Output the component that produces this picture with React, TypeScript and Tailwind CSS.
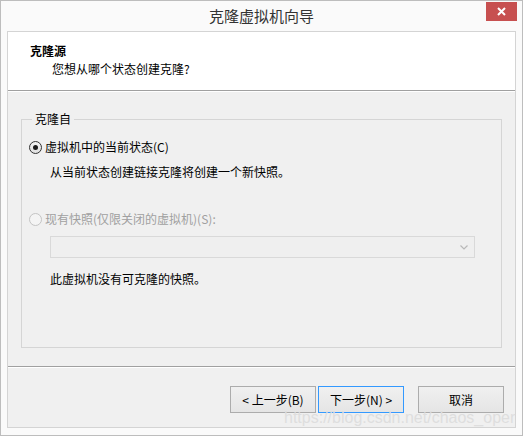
import React from 'react';

const font = { fontFamily: '"Noto Sans CJK SC", "Noto Sans", sans-serif' };

interface RadioProps {
  checked?: boolean;
  disabled?: boolean;
  label: string;
}

const Radio: React.FC<RadioProps> = ({ checked = false, disabled = false, label }) => {
  const ring = disabled ? 'border-[#c4c4c4] bg-[#f4f4f4]' : 'border-[#333333] bg-gradient-to-b from-[#f2f2f2] to-[#e0e0e0]';
  return (
    <div className="flex items-center h-[16px]">
      <span className={'w-[13px] h-[13px] rounded-full border flex items-center justify-center ' + ring}>
        {checked && <span className="w-[5px] h-[5px] rounded-full bg-[#1a1a1a]" />}
      </span>
      <span className={'ml-[3px] text-[12px] leading-[16px] ' + (disabled ? 'text-[#a0a0a0]' : 'text-black')}>{label}</span>
    </div>
  );
};

interface ButtonProps {
  children: React.ReactNode;
  primary?: boolean;
  className?: string;
}

const Button: React.FC<ButtonProps> = ({ children, primary = false, className = '' }) => {
  const borderClass = primary ? 'border-[#3399ff]' : 'border-[#acacac]';
  return (
    <div
      className={
        'w-[86px] h-[27px] border bg-gradient-to-b from-[#f0f0f0] to-[#e5e5e5] flex items-center justify-center text-[12px] leading-[16px] text-black ' +
        borderClass +
        ' ' +
        className
      }
    >
      {children}
    </div>
  );
};

export default function App() {
  return (
    <div
      className="relative w-[523px] h-[436px] border border-[#bdbdbd] bg-[#fafafa] flex flex-col overflow-hidden"
      style={font}
    >
      {/* title bar */}
      <div className="relative h-[30px] flex items-center justify-center shrink-0">
        <span className="text-[15px] leading-[20px] text-[#333333]">克隆虚拟机向导</span>
        <div className="absolute right-[5px] top-[1px] w-[31px] h-[19px] bg-[#c75050] flex items-center justify-center">
          <svg width="9" height="9" viewBox="0 0 9 9">
            <path d="M1 1 L8 8 M8 1 L1 8" stroke="#ffffff" strokeWidth="2" />
          </svg>
        </div>
      </div>

      {/* client */}
      <div className="mx-[6px] mb-[7px] flex-1 border border-[#d4d4d4] bg-[#f0f0f0] flex flex-col">
        <div className="h-[58px] bg-white pt-[11px] pl-[22px] shrink-0">
          <div className="text-[12px] leading-[16px] font-bold text-black">克隆源</div>
          <div className="mt-[2px] pl-[22px] text-[12px] leading-[16px] text-black">您想从哪个状态创建克隆?</div>
        </div>
        <div className="h-px bg-[#a0a0a0]" />
        <div className="h-px bg-white" />

        <div className="flex-1 px-[13px]">
          <fieldset className="mt-[19px] h-[237px] border border-[#d5d5d5] pl-[7px]">
            <legend className="ml-[3px] px-[3px] text-[12px] leading-[16px] text-black">克隆自</legend>
            <div className="mt-[12px]">
              <Radio checked label="虚拟机中的当前状态(C)" />
            </div>
            <div className="mt-[9px] ml-[21px] text-[12px] leading-[16px] text-black">
              从当前状态创建链接克隆将创建一个新快照。
            </div>
            <div className="mt-[31px]">
              <Radio disabled label="现有快照(仅限关闭的虚拟机)(S):" />
            </div>
            <div className="mt-[9px] ml-[21px] w-[425px] h-[22px] border border-[#d9d9d9] bg-[#efefef] flex items-center justify-end pr-[6px]">
              <svg width="8" height="5" viewBox="0 0 8 5">
                <path d="M0.5 0.5 L4 4 L7.5 0.5" stroke="#b8b8b8" strokeWidth="1.2" fill="none" />
              </svg>
            </div>
            <div className="mt-[13px] ml-[21px] text-[12px] leading-[16px] text-black">此虚拟机没有可克隆的快照。</div>
          </fieldset>
        </div>

        <div className="h-px bg-[#a0a0a0]" />
        <div className="h-px bg-white" />
        <div className="h-[59px] flex items-start justify-end pt-[18px] pr-[11px] shrink-0">
          <Button>&lt; 上一步(B)</Button>
          <Button primary className="ml-[2px]">下一步(N) &gt;</Button>
          <Button className="ml-[14px]">取消</Button>
        </div>
      </div>

      <div
        className="absolute left-[283px] top-[407px] text-[16px] leading-[20px] text-[#dedede] pointer-events-none"
        style={{ fontFamily: '"Liberation Sans", Arial, sans-serif' }}
      >
        https://blog.csdn.net/chaos_oper
      </div>
    </div>
  );
}
